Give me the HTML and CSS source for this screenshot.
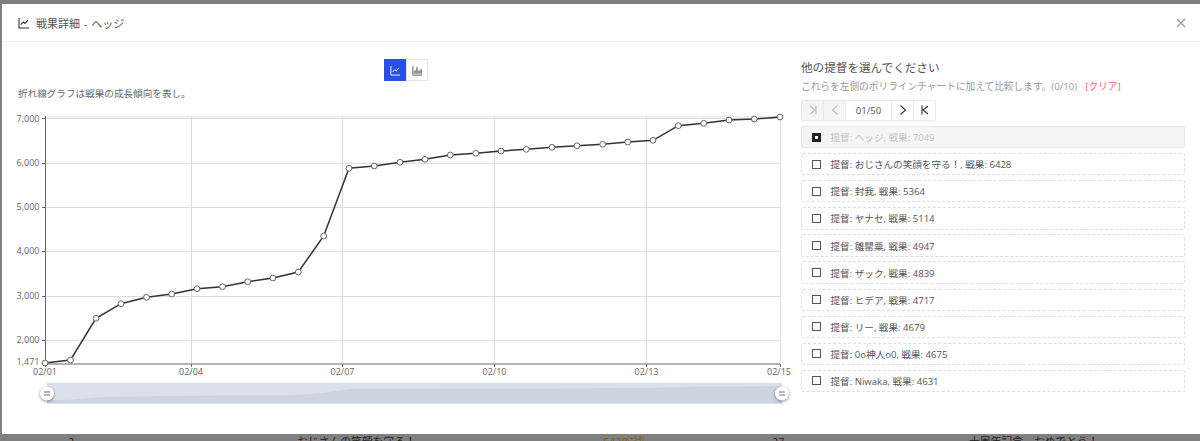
FILE: index.html
```html
<!DOCTYPE html>
<html lang="ja">
<head>
  <meta charset="UTF-8" />
  <title>戦果詳細 - ヘッジ</title>
  <link rel="stylesheet" href="styles.css">
</head>
<body>
  <div class="modal">
    <div class="modal-header">
      <svg class="title-icon" viewBox="0 0 12 12">
        <path d="M1 1v10h10M2.8 7.6l2.4-2.5 1.7 1.4L10 3.2" />
      </svg>
      <span class="modal-title">戦果詳細 - ヘッジ</span>
      <svg class="close-icon" viewBox="0 0 10 10">
        <path d="M1 1l8 8M9 1l-8 8" />
      </svg>
    </div>

    <div class="modal-body">
      <div class="left-col">
        <div class="toggle">
          <button class="toggle-btn active">
            <svg viewBox="0 0 12 12"><path d="M1 1v10h10M2.8 7.6l2.4-2.5 1.7 1.4L10 3.2" /></svg>
          </button>
          <button class="toggle-btn">
            <svg class="bars" viewBox="0 0 12 12"><path d="M1 1v10h10" /><path class="bar-fill" d="M2.500 6h1.500v3.500h-1.500zM4.700 2.500h1.500v7h-1.500zM6.900 6h1.500v3.500h-1.500zM9.100 4.500h1.500v5h-1.500z" /></svg>
          </button>
        </div>
        <p class="caption">折れ線グラフは戦果の成長傾向を表し。</p>

        <svg class="chart" viewBox="2 105 790 300">
          <!-- grid -->
          <g class="grid">
            <path class="grid-top" d="M45 116.8H780" />
            <path d="M45 118.5H780M45 163.5H780M45 207.5H780M45 251.5H780M45 296.5H780M45 340.5H780" />
            <path d="M191.5 117V363M342.5 117V363M494.5 117V363M646.5 117V363M780.5 117V363" />
          </g>
          <g class="axis">
            <path d="M45.5 116V364H780" />
            <path d="M42 118.5H45M42 163.5H45M42 207.5H45M42 251.5H45M42 296.5H45M42 340.5H45M42 363.5H45" />
            <path d="M45.5 364V367M191.5 364V367M342.5 364V367M494.5 364V367M646.5 364V367M780.5 364V367" />
          </g>
          <g class="y-labels">
            <text x="39.5" y="122">7,000</text>
            <text x="39.5" y="166">6,000</text>
            <text x="39.5" y="210">5,000</text>
            <text x="39.5" y="254">4,000</text>
            <text x="39.5" y="298.500">3,000</text>
            <text x="39.5" y="343">2,000</text>
            <text x="39.5" y="365">1,471</text>
          </g>
          <g class="x-labels">
            <text x="45" y="375">02/01</text>
            <text x="191" y="375">02/04</text>
            <text x="342.500" y="375">02/07</text>
            <text x="494.500" y="375">02/10</text>
            <text x="646.500" y="375">02/13</text>
            <text x="779" y="375">02/15</text>
          </g>
          <!-- series -->
          <polyline class="series" points="45,363 70.5,360 96,318.3 121,303.7 146.5,297.3 171.7,294 197,288.7 222.5,286.7 247.7,281.7 273,278 298.3,272 323.7,236 349,168.3 374.3,166 400,162.3 425,159.3 450.3,155 475.7,153.3 501,151 526.3,149.3 552,147.3 577,145.7 602.7,144.3 627.7,142 653,140.3 678.3,125.7 703.7,123.3 729,120 754.3,119 780,117" />
          <g class="dots">
            <circle cx="45" cy="363" r="2.9" /><circle cx="70.5" cy="360" r="2.9" /><circle cx="96" cy="318.3" r="2.9" />
            <circle cx="121" cy="303.7" r="2.9" /><circle cx="146.5" cy="297.3" r="2.9" /><circle cx="171.7" cy="294" r="2.9" />
            <circle cx="197" cy="288.7" r="2.9" /><circle cx="222.5" cy="286.7" r="2.9" /><circle cx="247.7" cy="281.7" r="2.9" />
            <circle cx="273" cy="278" r="2.9" /><circle cx="298.3" cy="272" r="2.9" /><circle cx="323.7" cy="236" r="2.9" />
            <circle cx="349" cy="168.3" r="2.9" /><circle cx="374.3" cy="166" r="2.9" /><circle cx="400" cy="162.3" r="2.9" />
            <circle cx="425" cy="159.3" r="2.9" /><circle cx="450.3" cy="155" r="2.9" /><circle cx="475.7" cy="153.3" r="2.9" />
            <circle cx="501" cy="151" r="2.9" /><circle cx="526.3" cy="149.3" r="2.9" /><circle cx="552" cy="147.3" r="2.9" />
            <circle cx="577" cy="145.7" r="2.9" /><circle cx="602.7" cy="144.3" r="2.9" /><circle cx="627.7" cy="142" r="2.9" />
            <circle cx="653" cy="140.3" r="2.9" /><circle cx="678.3" cy="125.7" r="2.9" /><circle cx="703.7" cy="123.3" r="2.9" />
            <circle cx="729" cy="120" r="2.9" /><circle cx="754.3" cy="119" r="2.9" /><circle cx="780" cy="117" r="2.9" />
          </g>
          <!-- zoom slider -->
          <rect class="slider-bg" x="47" y="383" width="735" height="20.500" />
          <polygon class="slider-area" points="47,403.500 47,400 70,399.800 96,397.500 121,396.600 197,395.700 298,395 324,393 349,389 400,388.800 653,387.900 678,387 782,386.200 782,403.500" />
          <g class="handle">
            <circle cx="47" cy="393.500" r="7" />
            <path d="M44 392H50M44 395H50" />
          </g>
          <g class="handle">
            <circle cx="782" cy="393.500" r="7" />
            <path d="M779 392H785M779 395H785" />
          </g>
        </svg>
      </div>

      <div class="right-col">
        <h3 class="side-title">他の提督を選んでください</h3>
        <p class="side-note">これらを左側のポリラインチャートに加えて比較します。(0/10)<a class="clear-link">[クリア]</a></p>

        <div class="pager">
          <span class="page-btn disabled"><svg viewBox="0 0 12 12"><path d="M3 2l5 4-5 4M9 1.500v9" /></svg></span>
          <span class="page-btn disabled"><svg viewBox="0 0 12 12"><path d="M8.500 1.500L3.500 6l5 4.500" /></svg></span>
          <span class="page-num">01/50</span>
          <span class="page-btn"><svg viewBox="0 0 12 12"><path d="M3.500 1.500l5 4.500-5 4.500" /></svg></span>
          <span class="page-btn"><svg viewBox="0 0 12 12"><path d="M3 1.500v9M9 2L4 6l5 4" /></svg></span>
        </div>

        <div class="row own"><span class="check checked"></span>提督: ヘッジ, 戦果: 7049</div>
        <div class="row"><span class="check"></span>提督: おじさんの笑顔を守る！, 戦果: 6428</div>
        <div class="row"><span class="check"></span>提督: 封我, 戦果: 5364</div>
        <div class="row"><span class="check"></span>提督: ヤナセ, 戦果: 5114</div>
        <div class="row"><span class="check"></span>提督: 雛罌粟, 戦果: 4947</div>
        <div class="row"><span class="check"></span>提督: ザック, 戦果: 4839</div>
        <div class="row"><span class="check"></span>提督: ヒデア, 戦果: 4717</div>
        <div class="row"><span class="check"></span>提督: リー, 戦果: 4679</div>
        <div class="row"><span class="check"></span>提督: 0o神人o0, 戦果: 4675</div>
        <div class="row"><span class="check"></span>提督: Niwaka, 戦果: 4631</div>
      </div>
    </div>
  </div>

  <div class="behind-row">
    <span>2</span>
    <span>おじさんの笑顔を守る！</span>
    <span class="score">6428<sup>(+94)</sup></span>
    <span>27</span>
    <span>十周年記念、おめでとう！</span>
  </div>
</body>
</html>
```

FILE: styles.css
```css
html, body {
  height: 441px;
  overflow: hidden;
}

body {
  margin: 0;
  padding-top: 4px;
  box-sizing: border-box;
  background-color: #808080;
  font-family: "Open Sans", "Noto Sans CJK JP", sans-serif;
  font-size: 9.6px;
  color: #666;
}

.modal {
  margin-left: 2px;
  height: 430px;
  background-color: #fff;
}

.modal-header {
  display: flex;
  align-items: center;
  height: 37px;
  padding: 0 14px 0 16px;
  border-bottom: 1px solid #f2f2f2;
}

.title-icon {
  width: 12px;
  height: 12px;
  margin-right: 6px;
  fill: none;
  stroke: #333;
  stroke-width: 1.1;
}

.modal-title {
  flex: 1;
  font-size: 11px;
  word-spacing: 1px;
  color: #555;
}

.close-icon {
  width: 10px;
  height: 10px;
  fill: none;
  stroke: #999;
  stroke-width: 1.2;
}

.modal-body {
  display: flex;
}

.left-col {
  width: 790px;
}

.toggle {
  display: flex;
  justify-content: center;
  margin-top: 17px;
  padding-left: 18px;
}

.toggle-btn {
  display: flex;
  align-items: center;
  justify-content: center;
  width: 22px;
  height: 22px;
  padding: 0;
  background-color: #fff;
  border: 1px solid #e6e6e6;
}

.toggle-btn svg {
  width: 11px;
  height: 11px;
  fill: none;
  stroke: #555;
  stroke-width: 1;
}

.toggle-btn .bar-fill {
  fill: #666;
  stroke: none;
}

.toggle-btn.active {
  background-color: #2b4fe8;
  border-color: #2b4fe8;
}

.toggle-btn.active svg {
  stroke: #fff;
}

.caption {
  margin: 6px 0 0;
  padding-left: 16px;
  line-height: 14px;
}

.chart {
  display: block;
  width: 790px;
  height: 300px;
  margin-top: 4px;
  font-size: 9px;
  fill: #666;
}

.grid path {
  fill: none;
  stroke: #ddd;
  stroke-width: 1;
}

.grid .grid-top {
  stroke: #eee;
  stroke-width: 2;
}

.axis path {
  fill: none;
  stroke: #666;
  stroke-width: 1;
}

.y-labels {
  text-anchor: end;
}

.x-labels {
  text-anchor: middle;
}

.series {
  fill: none;
  stroke: #333;
  stroke-width: 1.5;
}

.dots circle {
  fill: #fff;
  stroke: #666;
  stroke-width: 1;
}

.slider-bg {
  fill: #dbe1ea;
}

.slider-area {
  fill: #ccd4df;
}

.handle circle {
  fill: #fff;
  filter: drop-shadow(0 1px 1.5px rgba(0, 0, 0, 0.45));
}

.handle path {
  fill: none;
  stroke: #777;
  stroke-width: 1.2;
}

.right-col {
  width: 384px;
  margin-left: 9px;
}

.side-title {
  margin: 18px 0 0;
  font-size: 11.6px;
  font-weight: normal;
  line-height: 16px;
  color: #555;
}

.side-note {
  margin: 4px 0 0;
  font-size: 9.7px;
  line-height: 14px;
  color: #999;
}

.clear-link {
  margin-left: 8px;
  color: #f66;
}

.pager {
  display: inline-flex;
  height: 21.5px;
  margin-top: 5.5px;
  border: 1px solid #e8e8e8;
  border-radius: 2px;
  box-sizing: border-box;
  vertical-align: top;
}

.page-btn, .page-num {
  display: flex;
  align-items: center;
  justify-content: center;
  border-right: 1px solid #e8e8e8;
}

.page-btn {
  width: 21px;
}

.page-btn:last-child {
  border-right: none;
}

.page-btn svg {
  width: 12px;
  height: 12px;
  fill: none;
  stroke: #333;
  stroke-width: 1.1;
}

.page-btn.disabled {
  background-color: #f5f5f5;
}

.page-btn.disabled svg {
  stroke: #bbb;
}

.page-num {
  width: 45px;
  color: #555;
}

.row {
  display: flex;
  align-items: center;
  height: 22.3px;
  margin-top: 4.8px;
  padding-left: 10px;
  box-sizing: border-box;
  border: 1px dashed #ddd;
  border-radius: 2px;
  color: #555;
}

.pager + .row {
  margin-top: 5px;
}

.row.own {
  background-color: #f5f5f5;
  border: 1px solid #e8e8e8;
  color: #c4c4c4;
}

.check {
  flex: none;
  width: 9px;
  height: 9px;
  margin-right: 9.5px;
  box-sizing: border-box;
  border: 1px solid #555;
}

.check.checked {
  background-color: #222;
  border: 3px solid #222;
  background-clip: padding-box;
  box-shadow: inset 0 0 0 3px #fff;
}

.behind-row {
  display: grid;
  grid-template-columns: 229px 306px 169px 197px 1fr;
  padding: 1px 0 0 68px;
  font-size: 10.8px;
  line-height: 14px;
  color: #222;
}

.score {
  color: #8a5a00;
}

.score sup {
  font-size: 7px;
  line-height: 0;
}
```
